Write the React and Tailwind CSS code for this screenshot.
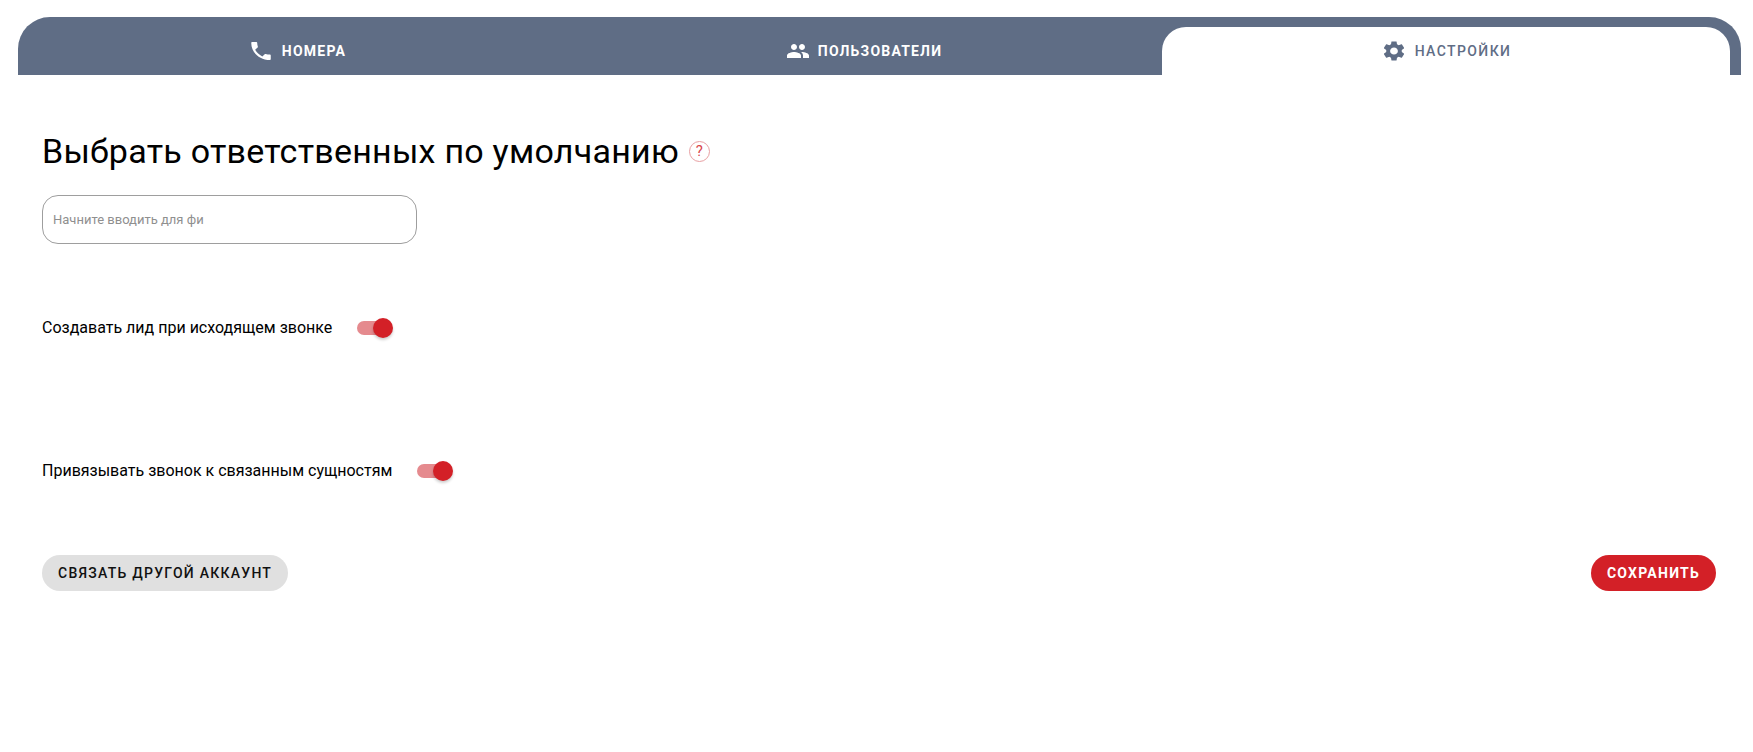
import React from 'react';

const font = { fontFamily: 'Roboto, sans-serif' };

const PhoneIcon = ({ className }) => (
  <svg viewBox="0 0 24 24" className={className} fill="currentColor" preserveAspectRatio="none">
    <path d="M6.62 10.79c1.44 2.83 3.76 5.14 6.59 6.59l2.2-2.2c.27-.27.67-.36 1.02-.24 1.12.37 2.33.57 3.57.57.55 0 1 .45 1 1V20c0 .55-.45 1-1 1-9.39 0-17-7.61-17-17 0-.55.45-1 1-1h3.5c.55 0 1 .45 1 1 0 1.25.2 2.45.57 3.57.11.35.03.74-.25 1.02l-2.2 2.2z" />
  </svg>
);

const PeopleIcon = ({ className }) => (
  <svg viewBox="0 0 24 24" className={className} fill="currentColor">
    <path d="M16 11c1.66 0 2.99-1.34 2.99-3S17.66 5 16 5c-1.66 0-3 1.34-3 3s1.34 3 3 3zm-8 0c1.66 0 2.99-1.34 2.99-3S9.66 5 8 5C6.34 5 5 6.34 5 8s1.34 3 3 3zm0 2c-2.33 0-7 1.17-7 3.5V19h14v-2.5c0-2.33-4.67-3.5-7-3.5zm8 0c-.29 0-.62.02-.97.05 1.16.84 1.97 1.97 1.97 3.45V19h6v-2.5c0-2.33-4.67-3.5-7-3.5z" />
  </svg>
);

const GearIcon = ({ className }) => (
  <svg viewBox="0 0 24 24" className={className} fill="currentColor" preserveAspectRatio="none">
    <path d="M19.14 12.94c.04-.3.06-.61.06-.94 0-.32-.02-.64-.07-.94l2.03-1.58c.18-.14.23-.41.12-.61l-1.92-3.32c-.12-.22-.37-.29-.59-.22l-2.39.96c-.5-.38-1.03-.7-1.62-.94l-.36-2.54c-.04-.24-.24-.41-.48-.41h-3.84c-.24 0-.43.17-.47.41l-.36 2.54c-.59.24-1.13.57-1.62.94l-2.39-.96c-.22-.08-.47 0-.59.22L2.74 8.87c-.12.21-.08.47.12.61l2.03 1.58c-.05.3-.09.63-.09.94s.02.64.07.94l-2.03 1.58c-.18.14-.23.41-.12.61l1.92 3.32c.12.22.37.29.59.22l2.39-.96c.5.38 1.03.7 1.62.94l.36 2.54c.05.24.24.41.48.41h3.84c.24 0 .44-.17.47-.41l.36-2.54c.59-.24 1.13-.56 1.62-.94l2.39.96c.22.08.47 0 .59-.22l1.92-3.32c.12-.22.07-.47-.12-.61l-2.01-1.58zM12 15.6c-1.98 0-3.6-1.62-3.6-3.6s1.62-3.6 3.6-3.6 3.6 1.62 3.6 3.6-1.62 3.6-3.6 3.6z" />
  </svg>
);

function Toggle() {
  return (
    <div className="relative w-[34px] h-[14px] rounded-full bg-[#e58a8e]">
      <div className="absolute right-[-2px] top-[-3px] w-5 h-5 rounded-full bg-[#d32027] shadow-[0_2px_3px_rgba(0,0,0,0.2)]" />
    </div>
  );
}

export default function App() {
  return (
    <div className="min-h-screen bg-white pl-[18px] pr-[12px] pt-[17px] text-black" style={font}>
      <div className="flex h-[58px] rounded-t-[32px] bg-[#5f6d85] pt-[10px] overflow-hidden">
        <div className="w-[558px] h-[48px] flex items-center justify-center gap-[8px] text-white">
          <PhoneIcon className="w-[26px] h-6" />
          <span className="text-[14px] font-bold tracking-[1.25px]">НОМЕРА</span>
        </div>
        <div className="w-[576px] h-[48px] flex items-center justify-center gap-[8px] text-white">
          <PeopleIcon className="w-6 h-6" />
          <span className="text-[14px] font-bold tracking-[1.2px]">ПОЛЬЗОВАТЕЛИ</span>
        </div>
        <div className="w-[568px] h-[48px] ml-[10px] flex items-center justify-center gap-[8px] rounded-t-[24px] bg-white text-[#5f6d85]">
          <GearIcon className="w-[26px] h-6" />
          <span className="text-[14px] font-medium tracking-[1.4px]">НАСТРОЙКИ</span>
        </div>
      </div>

      <div className="pl-[24px] pr-[25px] pt-[56px]">
        <div className="flex items-center gap-[10px]">
          <h1 className="text-[34px] leading-[40px] tracking-[0.25px]">Выбрать ответственных по умолчанию</h1>
          <div className="w-[21px] h-[21px] rounded-full border border-[#e8a0a3] flex items-center justify-center text-[15px] text-[#d9474d]">?</div>
        </div>

        <input
          placeholder="Начните вводить для фи"
          className="block mt-[24px] w-[375px] h-[49px] rounded-[16px] border border-[#9e9e9e] px-[10px] text-[13px] outline-none placeholder:text-[#8f8f8f]"
        />

        <div className="flex items-center gap-[25px] mt-[72px] h-6">
          <span className="text-[16px]">Создавать лид при исходящем звонке</span>
          <Toggle />
        </div>

        <div className="flex items-center gap-[25px] mt-[119px] h-6">
          <span className="text-[16px]">Привязывать звонок к связанным сущностям</span>
          <Toggle />
        </div>

        <div className="flex items-center justify-between mt-[72px]">
          <button className="h-9 px-4 rounded-full bg-[#e0e0e0] text-[14px] font-medium tracking-[1.25px] text-[#111]">СВЯЗАТЬ ДРУГОЙ АККАУНТ</button>
          <button className="h-9 px-4 rounded-full bg-[#d32027] text-[14px] font-bold tracking-[1.25px] text-white">СОХРАНИТЬ</button>
        </div>
      </div>
    </div>
  );
}
